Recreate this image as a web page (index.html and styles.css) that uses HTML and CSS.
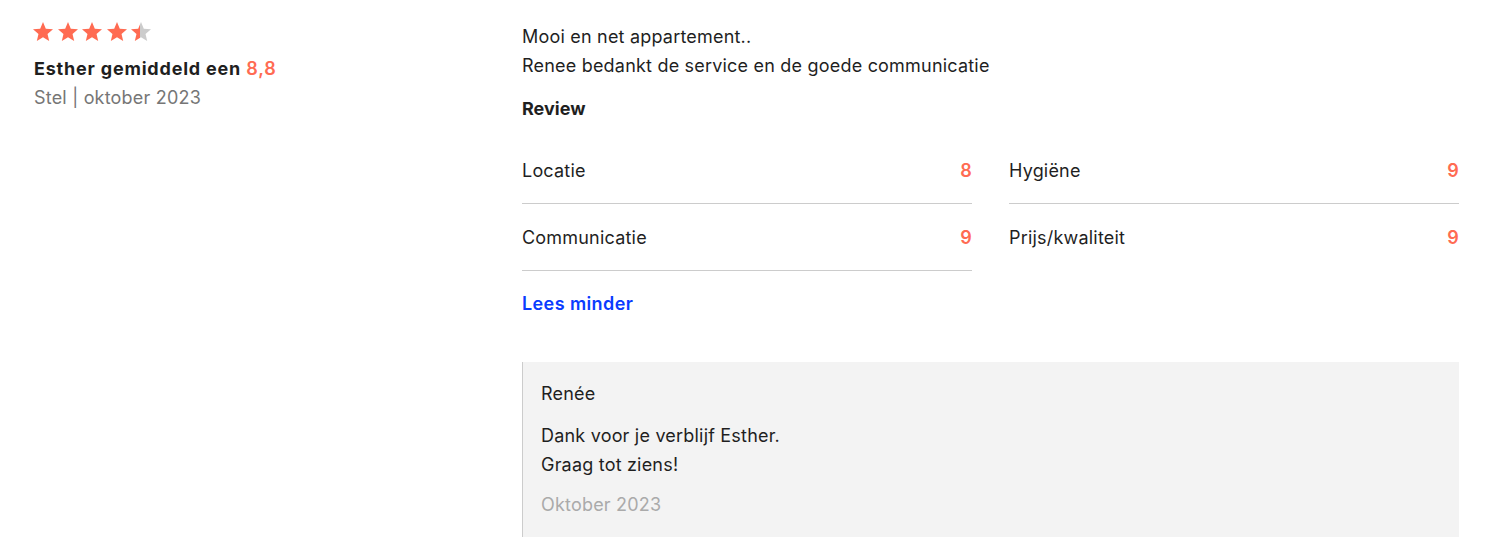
FILE: index.html
```html
<!DOCTYPE html>
<html lang="nl">
<head>
    <meta charset="UTF-8">
    <meta name="viewport" content="width=device-width, initial-scale=1.0">
    <title>Review</title>
    <link rel="stylesheet" href="styles.css">
</head>
<body>

    <div class="review">
        <div class="review-meta">
            <div class="stars">
                <svg class="star" viewBox="0 0 24 24"><path d="M12 17.27L18.18 21l-1.64-7.03L22 9.24l-7.19-.61L12 2 9.19 8.63 2 9.24l5.46 4.73L5.82 21z"/></svg>
                <svg class="star" viewBox="0 0 24 24"><path d="M12 17.27L18.18 21l-1.64-7.03L22 9.24l-7.19-.61L12 2 9.19 8.63 2 9.24l5.46 4.73L5.82 21z"/></svg>
                <svg class="star" viewBox="0 0 24 24"><path d="M12 17.27L18.18 21l-1.64-7.03L22 9.24l-7.19-.61L12 2 9.19 8.63 2 9.24l5.46 4.73L5.82 21z"/></svg>
                <svg class="star" viewBox="0 0 24 24"><path d="M12 17.27L18.18 21l-1.64-7.03L22 9.24l-7.19-.61L12 2 9.19 8.63 2 9.24l5.46 4.73L5.82 21z"/></svg>
                <svg class="star" viewBox="0 0 24 24">
                    <defs>
                        <linearGradient id="half">
                            <stop offset="45%" stop-color="#ff6b52"/>
                            <stop offset="45%" stop-color="#cccccc"/>
                        </linearGradient>
                    </defs>
                    <path fill="url(#half)" d="M12 17.27L18.18 21l-1.64-7.03L22 9.24l-7.19-.61L12 2 9.19 8.63 2 9.24l5.46 4.73L5.82 21z"/>
                </svg>
            </div>
            <div class="author">Esther gemiddeld een <span class="score">8,8</span></div>
            <div class="sub">Stel | oktober 2023</div>
        </div>

        <div class="review-body">
            <p class="text">Mooi en net appartement..<br>Renee bedankt de service en de goede communicatie</p>
            <h4>Review</h4>
            <div class="ratings">
                <div class="rating"><span>Locatie</span><span class="score">8</span></div>
                <div class="rating"><span>Hygiëne</span><span class="score">9</span></div>
                <div class="rating"><span>Communicatie</span><span class="score">9</span></div>
                <div class="rating"><span>Prijs/kwaliteit</span><span class="score">9</span></div>
            </div>
            <a href="#" class="toggle">Lees minder</a>

            <div class="reply">
                <div class="reply-name">Renée</div>
                <p class="reply-text">Dank voor je verblijf Esther.<br>Graag tot ziens!</p>
                <div class="reply-date">Oktober 2023</div>
            </div>
        </div>
    </div>

</body>
</html>
```

FILE: styles.css
```css
body {
    font-family: Inter, "DejaVu Sans", sans-serif;
    font-size: 18px;
    line-height: 1.6;
    letter-spacing: 0.2px;
    color: #1f1f1f;
    background-color: #fff;
    margin: 0;
}
.review {
    display: grid;
    grid-template-columns: 488px 1fr;
    padding: 23px 46px 15px 34px;
}
.stars {
    display: flex;
    gap: 0.6px;
    margin: -3px 0 0 -3px;
}
.star {
    width: 24px;
    height: 24px;
    fill: #ff6b52;
}
.author {
    font-weight: 700;
    letter-spacing: 0.8px;
    margin-top: 11px;
}
.score {
    color: #ff6b52;
    font-weight: 600;
}
.sub {
    color: #767676;
}
.text {
    margin: 0;
}
h4 {
    font-size: 18px;
    font-weight: 700;
    letter-spacing: 0;
    margin: 14px 0 14px;
}
.ratings {
    display: grid;
    grid-template-columns: 1fr 1fr;
    column-gap: 37px;
}
/* only the left column keeps a line under its last row */
.rating {
    display: flex;
    justify-content: space-between;
    align-items: center;
    padding: 21px 0 19px;
    line-height: 26px;
    border-bottom: 1px solid #cccccc;
}
.ratings .rating:nth-child(4) {
    border-bottom-color: transparent;
}
.toggle {
    display: inline-block;
    margin-top: 19px;
    color: #0a3cff;
    font-weight: 600;
    letter-spacing: 0.4px;
    text-decoration: none;
}
.reply {
    margin-top: 43px;
    background-color: #f3f3f3;
    border-left: 1px solid #cccccc;
    padding: 18px;
}
.reply-text {
    margin: 13px 0 11px;
}
.reply-date {
    color: #aaaaaa;
}
```
